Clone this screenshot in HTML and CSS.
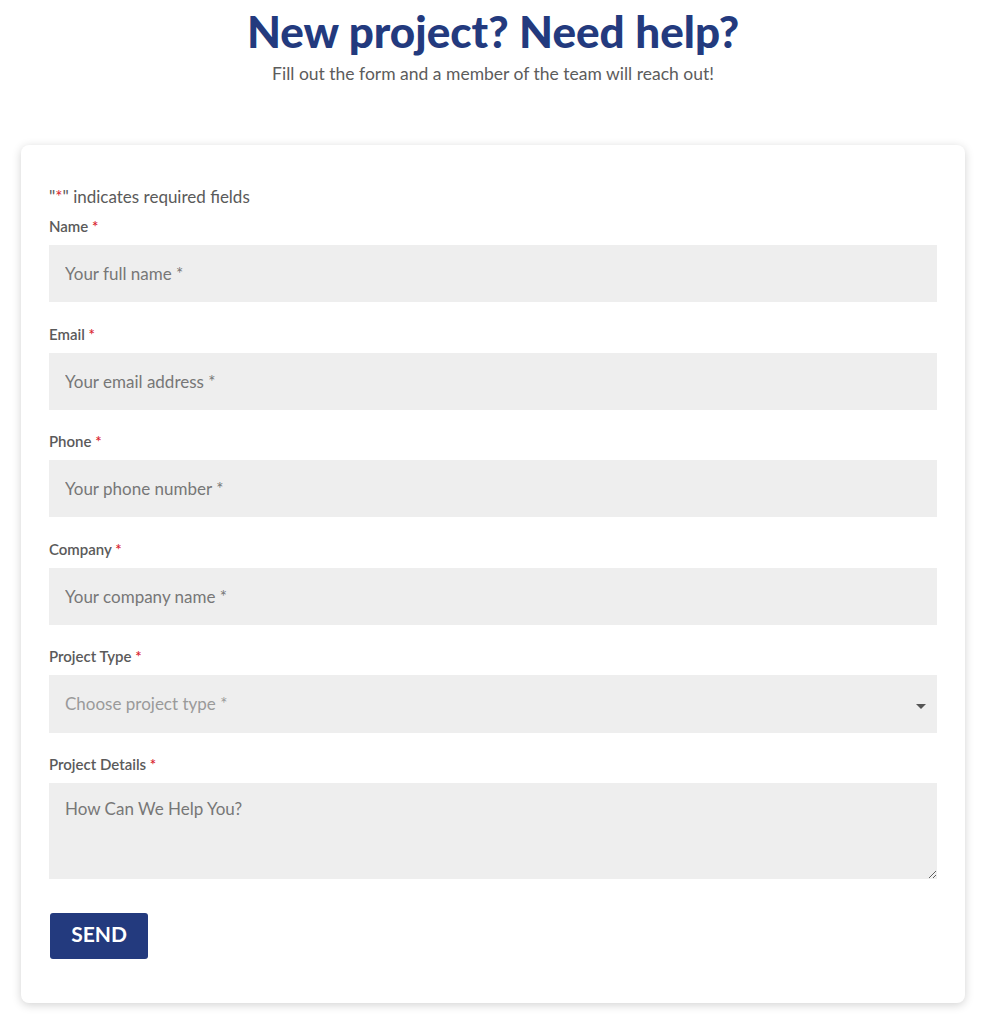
FILE: index.html
```html
<!DOCTYPE html>
<html lang="en">
<head>
  <meta charset="UTF-8" />
  <meta name="viewport" content="width=device-width, initial-scale=1.0" />
  <title>Contact</title>
  <link rel="stylesheet" href="styles.css">
</head>
<body>

  <main>
    <!-- Page heading -->
    <header class="intro">
      <h1>New project? Need help?</h1>
      <p>Fill out the form and a member of the team will reach out!</p>
    </header>

    <!-- Contact form card -->
    <form class="card">
      <p class="required-note">"<span class="req">*</span>" indicates required fields</p>

      <div class="field">
        <label for="name">Name <span class="req">*</span></label>
        <input id="name" type="text" placeholder="Your full name *">
      </div>

      <div class="field">
        <label for="email">Email <span class="req">*</span></label>
        <input id="email" type="email" placeholder="Your email address *">
      </div>

      <div class="field">
        <label for="phone">Phone <span class="req">*</span></label>
        <input id="phone" type="tel" placeholder="Your phone number *">
      </div>

      <div class="field">
        <label for="company">Company <span class="req">*</span></label>
        <input id="company" type="text" placeholder="Your company name *">
      </div>

      <div class="field">
        <label for="type">Project Type <span class="req">*</span></label>
        <div class="select-wrap">
          <select id="type">
            <option>Choose project type *</option>
          </select>
        </div>
      </div>

      <div class="field">
        <label for="details">Project Details <span class="req">*</span></label>
        <textarea id="details" placeholder="How Can We Help You?"></textarea>
      </div>

      <button type="submit">SEND</button>
    </form>
  </main>

</body>
</html>
```

FILE: styles.css
```css
/* Global reset and font settings */
* { box-sizing: border-box; }
body, html {
  margin: 0;
  padding: 0;
  font-family: 'Lato', 'Open Sans', sans-serif;
  background-color: #fff;
  color: #5a5a5a;
}

main {
  padding: 0 20px 16px 21px;
}

/* Heading */
.intro {
  text-align: center;
}
.intro h1 {
  margin: 0;
  padding-top: 5px;
  font-size: 44px;
  line-height: 52px;
  font-weight: 900;
  color: #233a7e;
}
.intro p {
  margin: 6px 0 0;
  font-size: 17.5px;
  line-height: 22px;
  color: #5c5c5c;
}

/* Card */
.card {
  margin-top: 60px;
  background: #fff;
  border-radius: 8px;
  box-shadow: 0 2px 10px rgba(0, 0, 0, 0.18);
  padding: 41px 28px 44px;
  display: flex;
  flex-direction: column;
  gap: 21.5px;
}

.required-note {
  margin: 0 0 -13.5px;
  font-size: 17px;
  line-height: 22px;
}
.req {
  color: #d9232e;
}

/* Fields */
.field {
  display: flex;
  flex-direction: column;
  gap: 9px;
}
.field label {
  font-size: 15px;
  line-height: 20px;
  font-weight: 600;
  color: #5a5a5a;
}
.field input,
.field select,
.field textarea {
  width: 100%;
  border: none;
  background: #eeeeee;
  font-family: inherit;
  font-size: 17px;
  color: #6f6f6f;
  padding: 0 16px;
  outline: none;
}
.field input {
  height: 57px;
}
.field input::placeholder,
.field textarea::placeholder {
  color: #777;
}

/* Select with small arrow */
.select-wrap {
  position: relative;
}
.field select {
  height: 57.5px;
  appearance: none;
  color: #9a9a9a;
}
.select-wrap::after {
  content: "";
  position: absolute;
  right: 11px;
  top: 29px;
  border-left: 5px solid transparent;
  border-right: 5px solid transparent;
  border-top: 5px solid #555;
}

.field textarea {
  height: 96px;
  padding-top: 15px;
  resize: vertical;
}

/* Send button */
.card button {
  align-self: flex-start;
  margin: 12px 0 0 1px;
  width: 98px;
  height: 46px;
  border: none;
  border-radius: 3px;
  background: #233a7e;
  color: #fff;
  font-family: inherit;
  font-size: 21px;
  font-weight: 700;
  line-height: 1;
  padding-bottom: 6px;
  cursor: pointer;
}
```
